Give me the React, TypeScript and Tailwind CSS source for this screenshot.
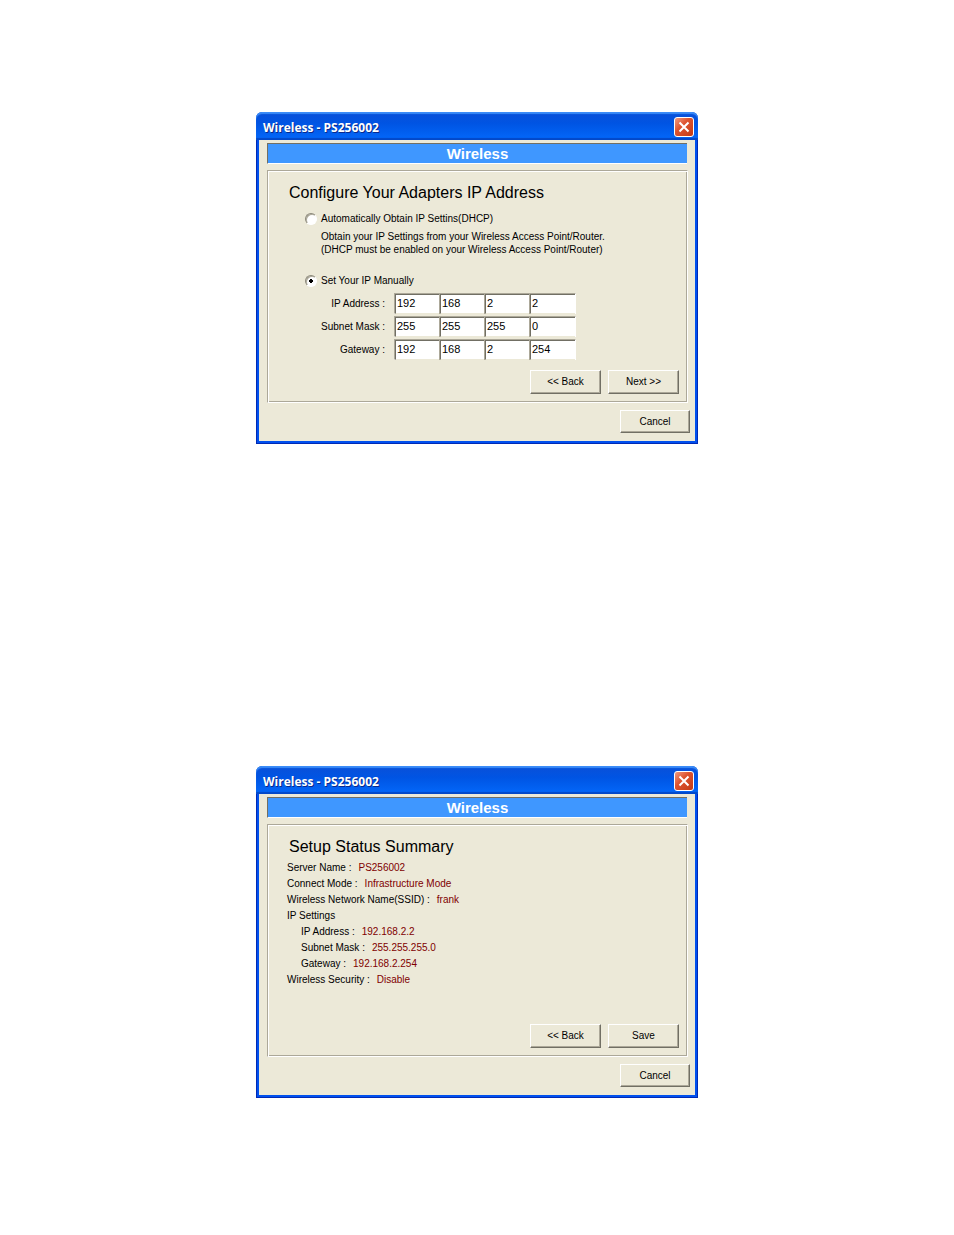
import { useState, type ReactNode } from "react";
import { clsx } from "clsx";

const ADDRESS_ROWS = [
  { id: "ip", label: "IP Address :", octets: ["192", "168", "2", "2"] },
  { id: "mask", label: "Subnet Mask :", octets: ["255", "255", "255", "0"] },
  { id: "gateway", label: "Gateway :", octets: ["192", "168", "2", "254"] },
];

const SUMMARY = [
  { label: "Server Name :", value: "PS256002" },
  { label: "Connect Mode :", value: "Infrastructure Mode" },
  { label: "Wireless Network Name(SSID) :", value: "frank" },
  { label: "IP Settings", value: "" },
  { label: "IP Address :", value: "192.168.2.2", nested: true },
  { label: "Subnet Mask :", value: "255.255.255.0", nested: true },
  { label: "Gateway :", value: "192.168.2.254", nested: true },
  { label: "Wireless Security :", value: "Disable" },
];

function PushButton({ children, className }: { children: ReactNode; className?: string }) {
  return (
    <button
      type="button"
      className={clsx(
        "border border-t-white border-l-white border-r-[#716f64] border-b-[#716f64] bg-[#ece9d8] text-center shadow-[inset_-1px_-1px_0_#aca899]",
        className,
      )}
    >
      {children}
    </button>
  );
}

function Radio({ id, checked, onChange }: { id: string; checked: boolean; onChange: () => void }) {
  return (
    <input
      id={id}
      type="radio"
      name="ip-mode"
      checked={checked}
      onChange={onChange}
      className="size-3 shrink-0 appearance-none rounded-full border border-t-[#8a8778] border-l-[#8a8778] border-r-white border-b-white bg-white shadow-[inset_1px_1px_0_#aca899] checked:bg-[radial-gradient(circle,#000_0_2px,#fff_2px)]"
    />
  );
}

function Dialog({ title, children, actions }: { title: string; children: ReactNode; actions: ReactNode }) {
  return (
    <section
      aria-label={title}
      className="flex w-full max-w-[442px] flex-col rounded-t-md bg-[#ece9d8] font-['Liberation_Sans',Arial,sans-serif] text-[10px] leading-4 text-black"
    >
      <header className="flex h-7 items-center justify-between rounded-t-md bg-linear-to-b from-[#0a50d8] via-[#0054e3] via-40% to-[#0468fa] pr-1 pl-[7px] shadow-[inset_0_2px_1px_#3b8cf8,inset_0_-2px_1px_#0348c8]">
        <h1 className="pt-1 font-['Open_Sans','Noto_Sans',sans-serif] text-[12px] font-bold text-white [text-shadow:1px_1px_#0a2a8c]">
          {title}
        </h1>
        <button
          type="button"
          aria-label="Close"
          className="mt-0.5 flex size-5 items-center justify-center rounded-[3px] border border-white bg-linear-to-br from-[#ee9a80] via-[#de5430] via-40% to-[#c33b14]"
        >
          <svg viewBox="0 0 12 12" className="size-3" stroke="#fff" strokeWidth="2" fill="none">
            <path d="M1.5 1.5l9 9M10.5 1.5l-9 9" />
          </svg>
        </button>
      </header>

      <div className="border-x border-b border-[#0029b4]">
        <div className="flex flex-col border-x-2 border-b-2 border-[#0050ee] pt-[3px] pr-[5px] pb-2 pl-2">
          <div className="mr-[3px] h-[21px] border-t border-b border-l border-t-[#716f64] border-b-white border-l-[#716f64] bg-[#3f97ff] text-center text-[15px] leading-5 font-bold text-white">
            Wireless
          </div>
          <div className="mt-1.5 mr-0.5 flex h-[233px] flex-col justify-between border border-t-[#aca899] border-r-white border-b-white border-l-[#aca899] shadow-[inset_1px_1px_0_#fff,inset_-1px_-1px_0_#aca899]">
            {children}
            <div className="flex justify-end gap-[7px] pr-2 pb-2">{actions}</div>
          </div>
          <PushButton className="mt-[7px] h-[23px] w-[70px] self-end">Cancel</PushButton>
        </div>
      </div>
    </section>
  );
}

function AddressDialog() {
  const [manual, setManual] = useState(true);

  return (
    <Dialog
      title="Wireless - PS256002"
      actions={
        <>
          <PushButton className="h-6 w-[71px]">&lt;&lt; Back</PushButton>
          <PushButton className="h-6 w-[71px]">Next &gt;&gt;</PushButton>
        </>
      }
    >
      <div className="pt-3 pl-[21px]">
        <h2 className="text-[16px] leading-5">Configure Your Adapters IP Address</h2>
        <div className="mt-2 flex items-center gap-1 pl-4">
          <Radio id="dhcp" checked={!manual} onChange={() => setManual(false)} />
          <label htmlFor="dhcp">Automatically Obtain IP Settins(DHCP)</label>
        </div>
        <p className="mt-[3px] pl-8 leading-[13px]">
          Obtain your IP Settings from your Wireless Access Point/Router.
          <br />
          (DHCP must be enabled on your Wireless Access Point/Router)
        </p>
        <div className="mt-[17px] flex items-center gap-1 pl-4">
          <Radio id="manual" checked={manual} onChange={() => setManual(true)} />
          <label htmlFor="manual">Set Your IP Manually</label>
        </div>
        <div className="mt-1 flex flex-col gap-0.5">
          {ADDRESS_ROWS.map((row) => (
            <div key={row.id} className="flex items-center gap-[9px]">
              <label htmlFor={row.id} className="w-24 text-right">
                {row.label}
              </label>
              <div className="grid h-[21px] w-[182px] grid-cols-4 divide-x divide-[#aca899] border border-t-[#aca899] border-r-white border-b-white border-l-[#aca899]">
                {row.octets.map((octet, i) => (
                  <div key={i} className="flex">
                    <input
                      id={i === 0 ? row.id : undefined}
                      aria-label={i === 0 ? undefined : `${row.label} ${i + 1}`}
                      defaultValue={octet}
                      className="w-full min-w-0 border-t border-b border-l border-t-[#716f64] border-b-[#ece9d8] border-l-[#716f64] bg-white pb-0.5 pl-px text-[11px] outline-none"
                    />
                  </div>
                ))}
              </div>
            </div>
          ))}
        </div>
      </div>
    </Dialog>
  );
}

function SummaryDialog() {
  return (
    <Dialog
      title="Wireless - PS256002"
      actions={
        <>
          <PushButton className="h-6 w-[71px]">&lt;&lt; Back</PushButton>
          <PushButton className="h-6 w-[71px]">Save</PushButton>
        </>
      }
    >
      <div className="pt-3 pl-[19px]">
        <h2 className="pl-0.5 text-[16px] leading-5">Setup Status Summary</h2>
        <dl className="mt-[3px]">
          {SUMMARY.map((item) => (
            <div key={item.label + item.value} className={clsx("flex gap-[7px]", item.nested && "pl-3.5")}>
              <dt>{item.label}</dt>
              <dd className="text-[#800000]">{item.value}</dd>
            </div>
          ))}
        </dl>
      </div>
    </Dialog>
  );
}

export default function App() {
  return (
    <main className="flex min-h-screen flex-col items-center gap-[322px] bg-white pt-28 pb-[137px]">
      <AddressDialog />
      <SummaryDialog />
    </main>
  );
}
